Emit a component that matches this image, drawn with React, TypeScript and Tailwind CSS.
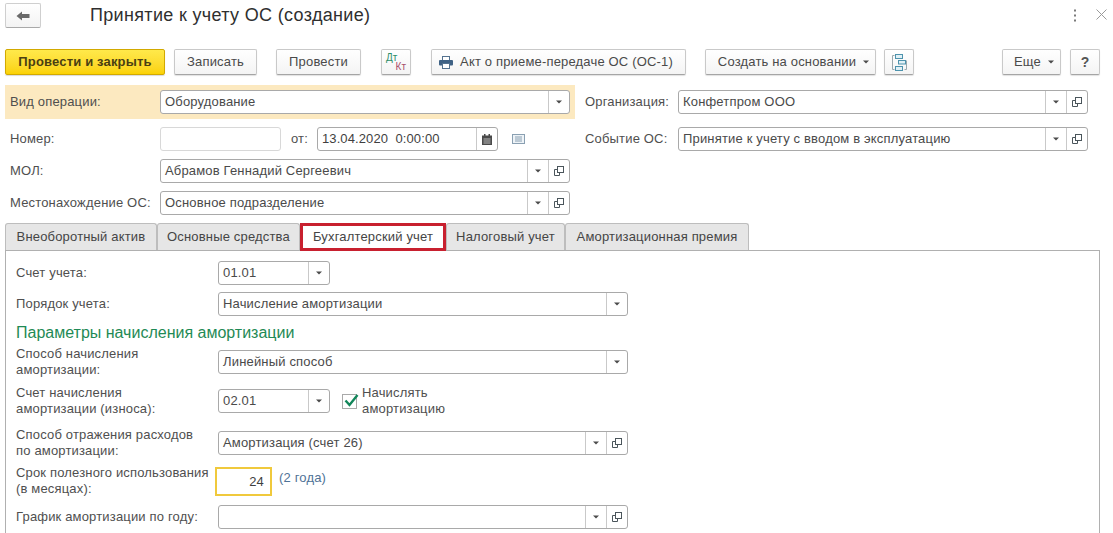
import React from "react";

const Caret = () => (
  <svg width="6" height="4" viewBox="0 0 6 4" className="block"><path d="M0 0.5h6L3 3.5z" fill="#4b4b4b" /></svg>
);

const OpenIcon = () => (
  <svg width="12" height="12" viewBox="0 0 12 12" fill="none" stroke="#4a555b" strokeWidth="1" className="block">
    <rect x="4.5" y="1.5" width="6" height="6" />
    <path d="M4.5 4.5H1.5V10.5H6.5V7.5" />
  </svg>
);

function Field({
  w,
  text = "",
  dd = 0,
  extra = false,
  pale = false,
}: {
  w: string;
  text?: string;
  dd?: number;
  extra?: boolean;
  pale?: boolean;
}) {
  return (
    <div
      className={`${w} h-[24px] shrink-0 flex rounded-[3px] border bg-white text-[13px] text-[#4a4a4a] ${
        pale ? "border-[#d8d8d8]" : "border-[#a9a9a9]"
      }`}
    >
      <div className="flex-1 min-w-0 pl-[4px] leading-[22px] whitespace-pre">{text}</div>
      {dd > 0 && (
        <div className="w-[21px] flex items-center justify-center border-l border-[#c9c9c9]">
          <Caret />
        </div>
      )}
      {extra && (
        <div className="w-[21px] flex items-center justify-center border-l border-[#c9c9c9]">
          <OpenIcon />
        </div>
      )}
    </div>
  );
}

function Btn({ w, children, cls = "" }: { w: string; children: React.ReactNode; cls?: string }) {
  return (
    <div
      className={`${w} ${cls} h-[26px] shrink-0 flex items-center justify-center gap-[7px] rounded-[2px] border border-[#c9c9c9] border-b-[#a5a5a5] bg-gradient-to-b from-white to-[#f4f4f4] text-[13px] text-[#4a4a4a] shadow-[0_1px_1px_rgba(0,0,0,0.12)] whitespace-nowrap`}
    >
      {children}
    </div>
  );
}

function Label({ w, children }: { w: string; children: React.ReactNode }) {
  return <div className={`${w} shrink-0 text-[13px] leading-[16px] text-[#4f4f4f]`}>{children}</div>;
}

function Tab({ w, children, active = false }: { w: string; children: React.ReactNode; active?: boolean }) {
  return (
    <div
      className={`${w} shrink-0 flex items-center justify-center text-[13px] whitespace-nowrap text-[#454545] ${
        active
          ? "h-[28px] bg-white border-[3px] border-[#c8202f] z-10 relative"
          : "h-[27px] bg-[#e6e6e6] border border-b-0 border-[#bdbdbd] rounded-t-[3px]"
      }`}
    >
      {children}
    </div>
  );
}

export default function App() {
  return (
    <div className="w-[1113px] h-[533px] overflow-hidden bg-white font-['Liberation_Sans',Arial,sans-serif] tracking-[0.17px]">
      {/* header */}
      <div className="h-[49px] flex pl-[5px] pt-[3px]">
        <div className="w-[36px] h-[25px] flex items-center justify-center rounded-[2px] border border-[#cfcfcf] border-b-[#a9a9a9] bg-gradient-to-b from-white to-[#f3f3f3]">
          <svg width="14" height="10" viewBox="0 0 14 10" className="block"><path d="M0.5 5L6 0.5V3H13.5V7H6V9.5z" fill="#6a6a6a" /></svg>
        </div>
        <div className="ml-[49px] text-[18px] leading-[24px] text-[#2f2f2f] tracking-[0.33px]">Принятие к учету ОС (создание)</div>
        <div className="ml-auto flex pr-[5px] pt-[6px] gap-[19px] items-start">
          <svg width="4" height="13" viewBox="0 0 4 13" className="block"><g fill="#7a7a7a"><rect x="1" y="0.5" width="2" height="2" /><rect x="1" y="5.5" width="2" height="2" /><rect x="1" y="10.5" width="2" height="2" /></g></svg>
          <svg width="11" height="11" viewBox="0 0 11 11" className="block mr-[1px]" stroke="#9a9a9a" strokeWidth="1"><path d="M0.5 0.5L10.5 10.5M10.5 0.5L0.5 10.5" /></svg>
        </div>
      </div>

      {/* toolbar */}
      <div className="flex pl-[5px]">
        <div className="w-[160px] h-[26px] shrink-0 flex items-center justify-center rounded-[2px] border border-[#d2a900] bg-gradient-to-b from-[#ffe94a] to-[#fbd200] text-[13px] font-bold text-[#4a3f12] shadow-[0_1px_1px_rgba(0,0,0,0.15)]">
          Провести и закрыть
        </div>
        <Btn w="w-[83px]" cls="ml-[9px]">Записать</Btn>
        <Btn w="w-[85px]" cls="ml-[19px]">Провести</Btn>
        <Btn w="w-[30px]" cls="ml-[20px]">
          <div className="w-[20px] h-[18px] text-[10px] leading-[9px] tracking-normal">
            <div className="text-[#2f8f6a]">Дт</div>
            <div className="text-right text-[#a8506c]">Кт</div>
          </div>
        </Btn>
        <Btn w="w-[255px]" cls="ml-[20px] pr-[5px]">
          <svg width="14" height="13" viewBox="0 0 14 13" className="block">
            <rect x="3.5" y="0.5" width="7" height="4" fill="#fff" stroke="#54728f" />
            <rect x="0" y="4" width="14" height="5.5" rx="1" fill="#3f6285" />
            <rect x="3.5" y="7.5" width="7" height="5" fill="#fff" stroke="#54728f" />
          </svg>
          <span>Акт о приеме-передаче ОС (ОС-1)</span>
        </Btn>
        <Btn w="w-[171px]" cls="ml-[19px] pl-[6px]">
          <span>Создать на основании</span>
          <Caret />
        </Btn>
        <Btn w="w-[30px]" cls="ml-[8px]">
          <svg width="15" height="17" viewBox="0 0 15 17" fill="none" className="block" stroke="#4d93ad">
            <path d="M0.5 1.5H2.5M0.5 1.5V15.5H2.5M14.5 6.5V15.5H12.5" stroke="#9aa8ad" />
            <rect x="3.5" y="0.5" width="7" height="4" fill="#e0f0f6" />
            <rect x="6.5" y="6.5" width="7" height="3.5" fill="#e0f0f6" />
            <rect x="3.5" y="12.5" width="7" height="4" fill="#e0f0f6" />
          </svg>
        </Btn>
        <Btn w="w-[59px]" cls="ml-[88px] pl-[5px]">
          <span>Еще</span>
          <Caret />
        </Btn>
        <Btn w="w-[30px]" cls="ml-[9px]"><span className="text-[14px] font-bold text-[#555]">?</span></Btn>
      </div>

      {/* head form */}
      <div className="flex pl-[5px] mt-[10px]">
        <div className="w-[570px] shrink-0">
          <div className="h-[34px] bg-[#fce9c0] flex items-center pl-[5px] pr-[5px]">
            <Label w="w-[150px]">Вид операции:</Label>
            <Field w="w-[410px]" text="Оборудование" dd={1} />
          </div>
          <div className="flex items-center pl-[5px] mt-[8px]">
            <Label w="w-[150px]">Номер:</Label>
            <Field w="w-[121px]" pale />
            <div className="w-[36px] pl-[10px] text-[13px] text-[#4f4f4f]">от:</div>
            <div className="w-[181px] h-[24px] shrink-0 flex rounded-[3px] border border-[#a9a9a9] text-[13px] text-[#3f3f3f]">
              <div className="flex-1 pl-[4px] leading-[22px] whitespace-pre tracking-[0.1px]">13.04.2020  0:00:00</div>
              <div className="w-[21px] flex items-center justify-center border-l border-[#c9c9c9]">
                <svg width="10" height="11" viewBox="0 0 10 11" className="block">
                  <rect x="0" y="1.5" width="10" height="9.5" fill="#4a4a4a" />
                  <rect x="2" y="0" width="1.5" height="3" fill="#4a4a4a" />
                  <rect x="6.5" y="0" width="1.5" height="3" fill="#4a4a4a" />
                  <path d="M1.5 5h7M1.5 7h7M1.5 9h7" stroke="#d8d8d8" strokeWidth="0.8" />
                </svg>
              </div>
            </div>
            <svg width="13" height="10" viewBox="0 0 13 10" fill="none" stroke="#8aa0b2" className="block ml-[14px]">
              <rect x="0.5" y="0.5" width="12" height="9" fill="#eef3f7" />
              <path d="M3 3H10M3 5H10M3 7H10" />
            </svg>
          </div>
          <div className="flex items-center pl-[5px] mt-[8px]">
            <Label w="w-[150px]">МОЛ:</Label>
            <Field w="w-[410px]" text="Абрамов Геннадий Сергеевич" dd={1} extra />
          </div>
          <div className="flex items-center pl-[5px] mt-[8px]">
            <Label w="w-[150px]">Местонахождение ОС:</Label>
            <Field w="w-[410px]" text="Основное подразделение" dd={1} extra />
          </div>
        </div>
        <div className="ml-[10px] pt-[5px]">
          <div className="flex items-center">
            <Label w="w-[93px]">Организация:</Label>
            <Field w="w-[410px]" text="Конфетпром ООО" dd={1} extra />
          </div>
          <div className="flex items-center mt-[13px]">
            <Label w="w-[93px]">Событие ОС:</Label>
            <Field w="w-[410px]" text="Принятие к учету с вводом в эксплуатацию" dd={1} extra />
          </div>
        </div>
      </div>

      {/* tabs */}
      <div className="flex ml-[5px] w-[1095px] h-[27px] mt-[8px]">
        <Tab w="w-[152px]">Внеоборотный актив</Tab>
        <Tab w="w-[143px]">Основные средства</Tab>
        <Tab w="w-[146px]" active>Бухгалтерский учет</Tab>
        <Tab w="w-[119px]">Налоговый учет</Tab>
        <Tab w="w-[184px]">Амортизационная премия</Tab>
      </div>

      {/* tab content */}
      <div className="ml-[5px] w-[1095px] h-[300px] border-t border-l border-r border-[#b0b0b0] pl-[10px] pt-[10px]">
        <div className="flex items-center">
          <Label w="w-[202px]">Счет учета:</Label>
          <Field w="w-[112px]" text="01.01" dd={1} />
        </div>
        <div className="flex items-center mt-[7px]">
          <Label w="w-[202px]">Порядок учета:</Label>
          <Field w="w-[410px]" text="Начисление амортизации" dd={1} />
        </div>
        <div className="mt-[8px] text-[16px] leading-[18px] tracking-normal text-[#1f8a55]">Параметры начисления амортизации</div>
        <div className="flex items-center mt-[4px]">
          <Label w="w-[202px]">Способ начисления<br />амортизации:</Label>
          <Field w="w-[410px]" text="Линейный способ" dd={1} />
        </div>
        <div className="flex items-center mt-[7px]">
          <Label w="w-[202px]">Счет начисления<br />амортизации (износа):</Label>
          <Field w="w-[112px]" text="02.01" dd={1} />
          <div className="ml-[12px] w-[15px] h-[15px] relative shrink-0 border border-[#a9a9a9] bg-white">
            <svg width="17" height="15" viewBox="0 0 17 15" fill="none" className="absolute left-[0px] -top-[2px]">
              <path d="M2.5 7.5L6.5 12L14.5 2" stroke="#12865a" strokeWidth="2.4" />
            </svg>
          </div>
          <div className="ml-[5px] text-[13px] leading-[16px] text-[#4f4f4f]">Начислять<br />амортизацию</div>
        </div>
        <div className="flex items-center mt-[10px]">
          <Label w="w-[202px]">Способ отражения расходов<br />по амортизации:</Label>
          <Field w="w-[410px]" text="Амортизация (счет 26)" dd={1} extra />
        </div>
        <div className="flex items-center mt-[6px]">
          <Label w="w-[199px]">Срок полезного использования<br />(в месяцах):</Label>
          <div className="w-[57px] h-[29px] shrink-0 border-2 border-[#f0c93c] bg-white text-right pr-[6px] pt-[3px] text-[13px] leading-[20px] text-[#3f3f3f]">24</div>
          <div className="ml-[7px] -mt-[7px] text-[13px] text-[#4f7397]">(2 года)</div>
        </div>
        <div className="flex items-center mt-[8px]">
          <Label w="w-[202px]">График амортизации по году:</Label>
          <Field w="w-[410px]" dd={1} extra />
        </div>
      </div>
    </div>
  );
}
